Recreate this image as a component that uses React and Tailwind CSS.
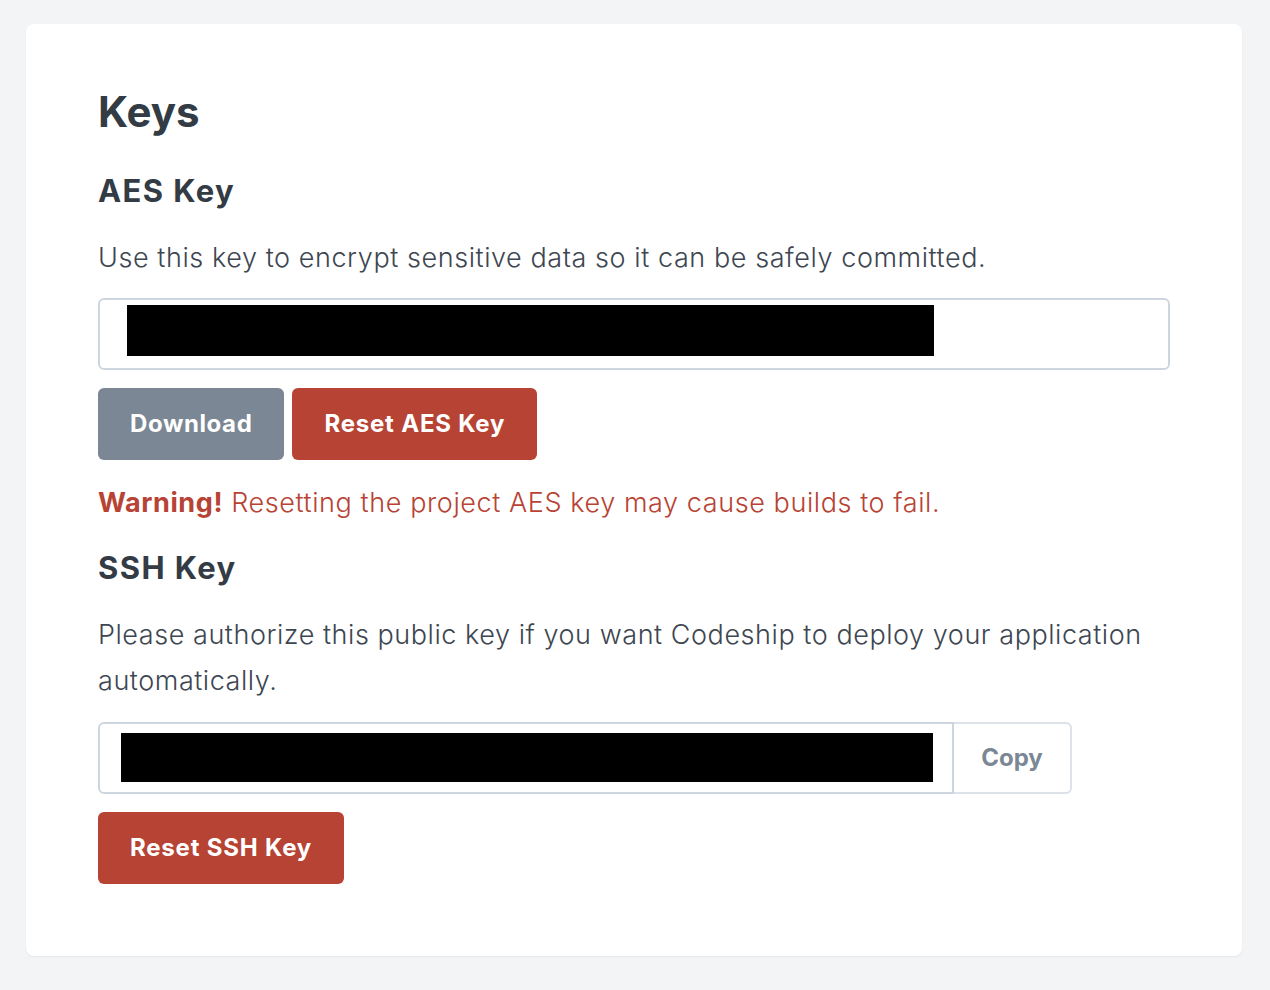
export default function App() {
  return (
    <div className="min-h-screen bg-[#f3f4f6] pt-6 pb-[34px] pl-[26px] pr-[28px]" style={{ fontFamily: 'Inter, "Noto Sans", sans-serif' }}>
      <div className="rounded-lg bg-white shadow-[0_1px_2px_rgba(0,0,0,0.06)] px-[72px] pt-16 pb-[72px]">
        <h1 className="text-[42px] leading-[48px] font-bold text-[#333b45]">Keys</h1>

        {/* AES key */}
        <h2 className="mt-[37px] text-[31px] leading-[36px] font-bold tracking-[1.4px] text-[#333b45]">AES Key</h2>
        <p className="mt-[26px] text-[27px] leading-[46px] font-light tracking-[0.57px] text-[#3d4651]">
          Use this key to encrypt sensitive data so it can be safely committed.
        </p>
        <div className="mt-[17px] h-[72px] w-full rounded-md border-2 border-[#cdd6df] pl-[27px] pt-[5px]">
          <div className="h-[51px] w-[807px] bg-black" />
        </div>
        <div className="mt-[18px] flex gap-2">
          <button className="h-[72px] rounded-md bg-[#7b8794] px-8 text-[24px] font-bold tracking-[0.6px] text-white">Download</button>
          <button className="h-[72px] rounded-md bg-[#b74334] px-8 text-[24px] font-bold tracking-[0.8px] text-white">Reset AES Key</button>
        </div>
        <p className="mt-5 text-[27px] leading-[46px] font-light tracking-[0.58px] text-[#b74334]">
          <span className="font-bold">Warning!</span> Resetting the project AES key may cause builds to fail.
        </p>

        {/* SSH key */}
        <h2 className="mt-6 text-[31px] leading-[36px] font-bold tracking-[1.4px] text-[#333b45]">SSH Key</h2>
        <p className="mt-[26px] text-[27px] leading-[46px] font-light tracking-[0.55px] text-[#3d4651]">
          Please authorize this public key if you want Codeship to deploy your application automatically.
        </p>
        <div className="mt-[18px] flex h-[72px] w-[974px]">
          <div className="flex-1 rounded-l-md border-2 border-[#cdd6df] pl-[21px] pt-[9px]">
            <div className="h-[49px] w-[812px] bg-black" />
          </div>
          <button className="w-[118px] rounded-r-md border-2 border-l-0 border-[#dde2e8] bg-white text-[24px] font-bold text-[#7b8794]">Copy</button>
        </div>
        <div className="mt-[18px]">
          <button className="h-[72px] rounded-md bg-[#b74334] px-8 text-[24px] font-bold tracking-[0.8px] text-white">Reset SSH Key</button>
        </div>
      </div>
    </div>
  );
}
